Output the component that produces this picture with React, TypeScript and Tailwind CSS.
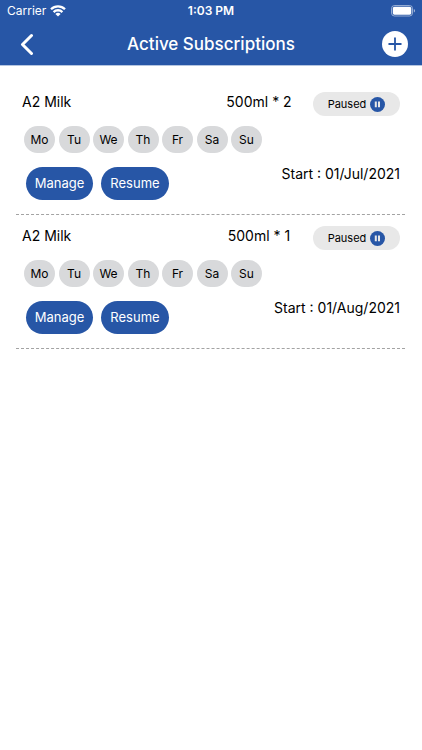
import { Plus } from "lucide-react";

interface Subscription {
  id: number;
  product: string;
  quantity: string;
  status: string;
  startDate: string;
}

const DAYS = ["Mo", "Tu", "We", "Th", "Fr", "Sa", "Su"];

const subscriptions: Subscription[] = [
  { id: 1, product: "A2 Milk", quantity: "500ml * 2", status: "Paused", startDate: "01/Jul/2021" },
  { id: 2, product: "A2 Milk", quantity: "500ml * 1", status: "Paused", startDate: "01/Aug/2021" },
];

function StatusBar() {
  return (
    <div className="grid h-[22px] grid-cols-3 items-center px-[7px] text-[12px] leading-4">
      <div className="flex items-center gap-1">
        <span>Carrier</span>
        {/* wifi */}
        <svg width="16" height="12" viewBox="0 0 16 12" fill="none" stroke="currentColor" strokeWidth="2.3">
          <path d="M1 4.2a10 10 0 0 1 14 0" />
          <path d="M3.6 7.1a6.2 6.2 0 0 1 8.800 0" />
          <path d="M8 11.600 5.400 9a3.700 3.700 0 0 1 5.200 0z" fill="currentColor" stroke="none" />
        </svg>
      </div>
      <span className="text-center font-semibold">1:03 PM</span>
      <div className="flex justify-end">
        {/* battery */}
        <svg width="24" height="12" viewBox="0 0 24 12" fill="none">
          <rect x="0.5" y="0.5" width="21" height="10.5" rx="3" stroke="currentColor" strokeOpacity="0.5" />
          <rect x="1.800" y="1.800" width="18.500" height="7.900" rx="1.600" fill="currentColor" />
          <path d="M22.800 4v3.600c.7-.3 1.200-1 1.200-1.800s-.5-1.500-1.200-1.800z" fill="currentColor" fillOpacity="0.6" />
        </svg>
      </div>
    </div>
  );
}

function SubscriptionRow({ item }: { item: Subscription }) {
  return (
    <li className="border-b border-dashed border-[#a3a3a3] pt-[11px] pr-[5px] pb-[14px] pl-[6px]">
      <div className="flex h-6 items-center">
        <h2 className="flex-1 self-start text-[14px] leading-5">{item.product}</h2>
        <span className="w-[108px] self-start text-center text-[14px] leading-5">{item.quantity}</span>
        <div className="flex h-6 w-[87px] items-center justify-center gap-1 rounded-full bg-[#e8e8e8] text-[11px]">
          <span>{item.status}</span>
          <svg width="15" height="15" viewBox="0 0 15 15">
            <circle cx="7.5" cy="7.5" r="7.5" fill="#2756a6" />
            <path d="M4.800 4.600h2v5.600h-2zM8 4.600h2v5.600H8z" fill="#e8e8e8" />
          </svg>
        </div>
      </div>

      <ul className="mt-[10px] ml-[2px] flex w-[238px] justify-between">
        {DAYS.map((day) => (
          <li key={day} className="flex h-[27px] w-[31px] items-center justify-center rounded-full bg-[#d8d9db] text-[12px]">
            {day}
          </li>
        ))}
      </ul>

      <div className="mt-[14px] flex items-start justify-between">
        <div className="ml-1 flex gap-2 text-[13px] text-white">
          <button type="button" className="h-[33px] w-[67px] rounded-full bg-[#2756a6]">Manage</button>
          <button type="button" className="h-[33px] w-[68px] rounded-full bg-[#2756a6]">Resume</button>
        </div>
        <p className="text-[14px] leading-[14px]">Start : {item.startDate}</p>
      </div>
    </li>
  );
}

export default function App() {
  return (
    <div className="min-h-screen bg-white font-['Inter','Liberation_Sans',sans-serif] text-black">
      <header className="border-b border-[#b4c5e0] bg-[#2756a6] text-white">
        <StatusBar />
        <div className="flex h-[43px] items-center justify-between px-[14px]">
          <button type="button" aria-label="Back" className="flex w-[26px] justify-center">
            <svg width="14" height="22" viewBox="0 0 14 22" fill="none" stroke="currentColor" strokeWidth="3" strokeLinecap="round" strokeLinejoin="round">
              <path d="M11.500 2.500 2.500 11.500l9 9" />
            </svg>
          </button>
          <h1 className="text-[17px] leading-6 font-medium">Active Subscriptions</h1>
          <button type="button" aria-label="Add subscription" className="flex size-[26px] items-center justify-center rounded-full bg-white text-[#2756a6]">
            <Plus size={20} strokeWidth={2.2} />
          </button>
        </div>
      </header>

      <main className="pt-[15px] pr-[17px] pl-4">
        <ul>
          {subscriptions.map((item) => (
            <SubscriptionRow key={item.id} item={item} />
          ))}
        </ul>
      </main>
    </div>
  );
}
